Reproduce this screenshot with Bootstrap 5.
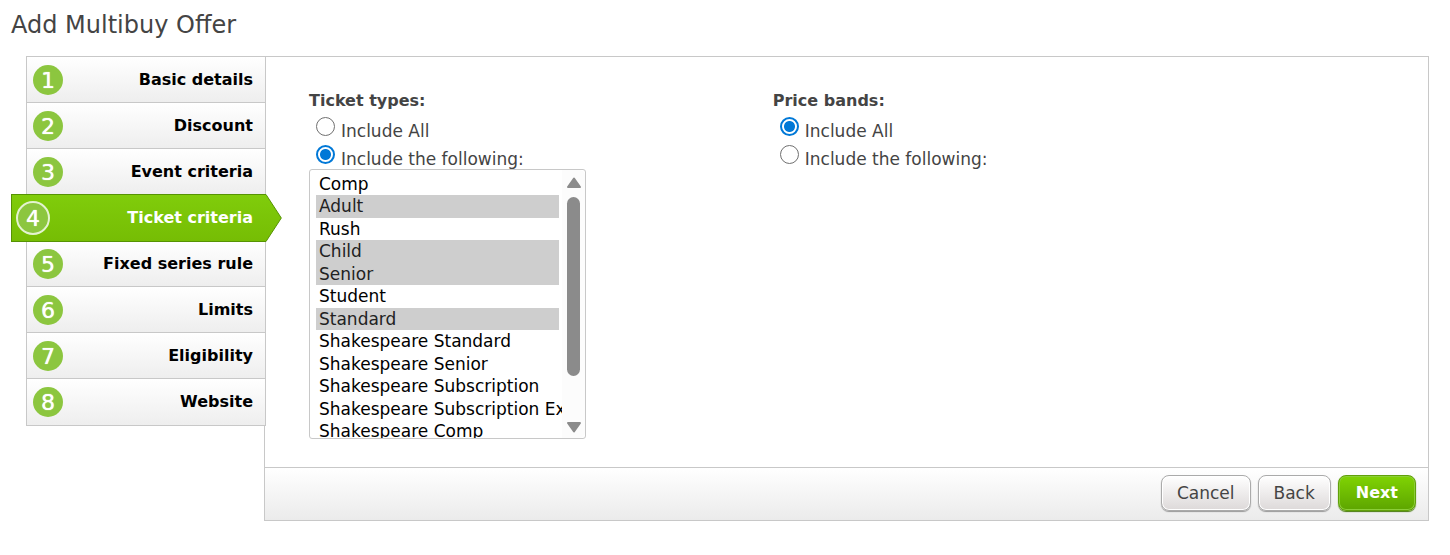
<!DOCTYPE html>
<html lang="en">
<head>
<meta charset="utf-8">
<meta name="viewport" content="width=device-width, initial-scale=1">
<title>Add Multibuy Offer</title>
<link href="https://cdn.jsdelivr.net/npm/bootstrap@5.3.0/dist/css/bootstrap.min.css" rel="stylesheet">
<style>
  body { font-family: Verdana, "DejaVu Sans", sans-serif; font-size: 17px; line-height: 22px; color: #444; }
  .page { padding: 8px 21px 16px 11px; }
  .page-title { font-size: 24px; line-height: 34px; font-weight: 400; margin: 0 0 14px; }
  .wizard { margin-left: 15px; }
  .steps { flex: 0 0 240px; border: 1px solid #c8c8c8; z-index: 1; }
  .step { height: 46px; padding: 0 12px 0 6px; color: #000; font-size: 16px; line-height: 24px; font-weight: 700; text-decoration: none; background: linear-gradient(#fff, #eee); border-bottom: 1px solid #c8c8c8; }
  .steps li:last-child .step { border-bottom: 0; }
  .step-num { width: 30px; height: 30px; border-radius: 50%; background: #8cc63f; color: #fff; font-size: 22px; line-height: 31px; font-weight: 400; text-align: center; text-shadow: 0 0 1px #fff; }
  .step-active { height: 48px; margin: -1px -1px -1px -16px; padding: 0 13px 0 4px; color: #fff; background: linear-gradient(#80cc0b, #76bd04); border: 1px solid #569303; border-right: 0; position: relative; }
  .step-active .step-num { width: 34px; height: 34px; border: 2px solid #e4f3d0; line-height: 31px; }
  .step-arrow { position: absolute; left: 100%; top: -1px; }
  .panel { margin-left: -2px; border: 1px solid #c8c8c8; min-width: 0; }
  .panel-main { padding: 33px 6px 28px 44px; }
  .group-title { font-size: 16px; line-height: 22px; font-weight: 700; margin: 0 0 5px; }
  .choice { height: 24px; padding-left: 7px; gap: 6px; }
  .choice + .choice { margin-top: 4px; }
  .choice label { line-height: 28px; }
  .dot { appearance: none; width: 19px; height: 19px; margin: 0; border: 1px solid #707070; border-radius: 50%; background: #fff; flex: none; }
  .dot:checked { border: 2px solid #0078d7; background: radial-gradient(circle, #0078d7 0 5px, #fff 6px); }
  .list-frame { width: 277px; position: relative; }
  .type-list { height: 270px; padding: 3px 23px 0 6px; border: 1px solid #c8c8c8; border-radius: 3px; background: #fff; color: #000; font: inherit; outline: 0; overflow: hidden; scrollbar-width: none; }
  .type-list option { height: 22px; min-height: 22px; padding: 1px 0 0 3px; margin-right: 3px; white-space: nowrap; overflow: visible; }
  .type-list option:nth-child(even) { height: 23px; min-height: 23px; }
  .type-list option:checked { background: #cecece linear-gradient(#cecece, #cecece); color: #222; }
  .scroller { position: absolute; top: 1px; right: 1px; bottom: 1px; width: 23px; background: #fcfcfc; padding: 7px 0 5px; }
  .thumb { width: 13px; height: 179px; border-radius: 7px; background: #8b8b8b; margin-top: 8px; }
  .panel-foot { border-top: 1px solid #c8c8c8; background: linear-gradient(#fff, #ebebeb); height: 53px; padding: 7px 12px; gap: 7px; }
  .act { height: 36px; padding: 0 15px; border: 1px solid #aaa; border-radius: 8px; font-size: 17px; line-height: 32px; color: #444; background: linear-gradient(#fff, #ddd9d9); box-shadow: inset 0 0 0 1px #fff, 0 1px 1px #999; }
  .act-next { padding: 0 17px; font-size: 16px; color: #fff; font-weight: 700; background: linear-gradient(#80d303, #5da500); border-color: #61a00a; box-shadow: inset 0 0 0 1px #8cce38, 0 1px 1px #477a0a; }
</style>
</head>
<body>
<main class="page">
  <h1 class="page-title">Add Multibuy Offer</h1>
  <div class="wizard d-flex align-items-start">
    <ol class="steps list-unstyled mb-0">
      <li><a href="#" class="step d-flex align-items-center justify-content-between"><span class="step-num">1</span>Basic details</a></li>
      <li><a href="#" class="step d-flex align-items-center justify-content-between"><span class="step-num">2</span>Discount</a></li>
      <li><a href="#" class="step d-flex align-items-center justify-content-between"><span class="step-num">3</span>Event criteria</a></li>
      <li><a href="#" class="step step-active d-flex align-items-center justify-content-between" aria-current="step"><span class="step-num">4</span>Ticket criteria
        <svg class="step-arrow" width="16" height="48" viewBox="0 0 16 48" aria-hidden="true"><defs><linearGradient id="arrow" x1="0" y1="0" x2="0" y2="1"><stop stop-color="#80cc0b"/><stop offset="1" stop-color="#76bd04"/></linearGradient></defs><path d="M0 .5L15.3 24L0 47.5" fill="url(#arrow)" stroke="#569303"/></svg></a></li>
      <li><a href="#" class="step d-flex align-items-center justify-content-between"><span class="step-num">5</span>Fixed series rule</a></li>
      <li><a href="#" class="step d-flex align-items-center justify-content-between"><span class="step-num">6</span>Limits</a></li>
      <li><a href="#" class="step d-flex align-items-center justify-content-between"><span class="step-num">7</span>Eligibility</a></li>
      <li><a href="#" class="step d-flex align-items-center justify-content-between"><span class="step-num">8</span>Website</a></li>
    </ol>
    <form class="panel flex-grow-1">
      <div class="panel-main">
        <div class="row g-0">
          <fieldset class="col-5">
            <legend class="group-title">Ticket types:</legend>
            <div class="choice d-flex align-items-start"><input class="dot" type="radio" name="types" id="types-all"><label for="types-all">Include All</label></div>
            <div class="choice d-flex align-items-start"><input class="dot" type="radio" name="types" id="types-some" checked><label for="types-some">Include the following:</label></div>
            <div class="list-frame">
              <select class="type-list d-block w-100" multiple size="12" aria-label="Ticket types">
                <option>Comp</option>
                <option selected>Adult</option>
                <option>Rush</option>
                <option selected>Child</option>
                <option selected>Senior</option>
                <option>Student</option>
                <option selected>Standard</option>
                <option>Shakespeare Standard</option>
                <option>Shakespeare Senior</option>
                <option>Shakespeare Subscription</option>
                <option>Shakespeare Subscription Ex</option>
                <option>Shakespeare Comp</option>
              </select>
              <div class="scroller d-flex flex-column align-items-center rounded-end" aria-hidden="true">
                <svg width="16" height="12" viewBox="0 0 16 12"><path d="M8 1.5L14 10H2Z" fill="#8b8b8b" stroke="#8b8b8b" stroke-width="2" stroke-linejoin="round"/></svg>
                <div class="thumb"></div>
                <svg class="mt-auto" width="16" height="12" viewBox="0 0 16 12"><path d="M8 10.5L14 2H2Z" fill="#8b8b8b" stroke="#8b8b8b" stroke-width="2" stroke-linejoin="round"/></svg>
              </div>
            </div>
          </fieldset>
          <fieldset class="col-5">
            <legend class="group-title">Price bands:</legend>
            <div class="choice d-flex align-items-start"><input class="dot" type="radio" name="bands" id="bands-all" checked><label for="bands-all">Include All</label></div>
            <div class="choice d-flex align-items-start"><input class="dot" type="radio" name="bands" id="bands-some"><label for="bands-some">Include the following:</label></div>
          </fieldset>
        </div>
      </div>
      <div class="panel-foot d-flex justify-content-end align-items-start">
        <button type="button" class="act">Cancel</button>
        <button type="button" class="act">Back</button>
        <button type="submit" class="act act-next">Next</button>
      </div>
    </form>
  </div>
</main>
<script src="https://cdn.jsdelivr.net/npm/bootstrap@5.3.0/dist/js/bootstrap.bundle.min.js"></script>
</body>
</html>
